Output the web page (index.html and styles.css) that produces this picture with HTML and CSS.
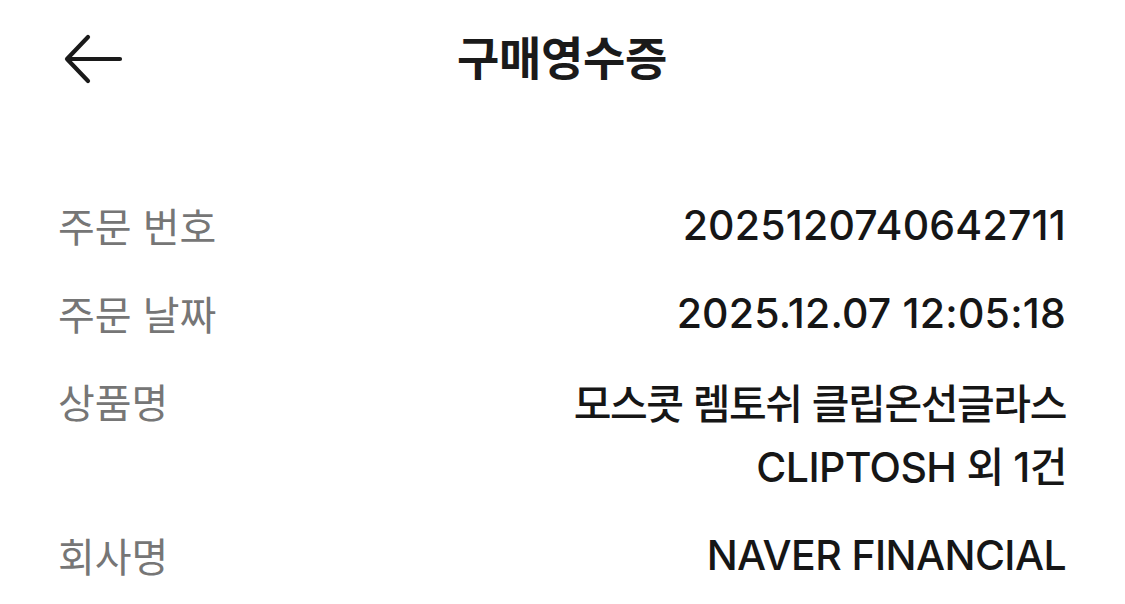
FILE: index.html
```html
<!DOCTYPE html>
<html lang="ko">
<head>
<meta charset="utf-8">
<link rel="stylesheet" href="styles.css">
</head>
<body>
<div class="page">
  <header class="header">
    <button class="back" aria-label="뒤로">
      <svg viewBox="0 0 60 50" width="60" height="50">
        <path d="M57 25 H4 M25 3 L4 25 L25 47" fill="none" stroke="#1a1a1a" stroke-width="4.2" stroke-linecap="round" stroke-linejoin="round"/>
      </svg>
    </button>
    <h1 class="title">구매영수증</h1>
  </header>
  <dl class="info">
    <div class="row">
      <dt class="label">주문 번호</dt>
      <dd class="value num">2025120740642711</dd>
    </div>
    <div class="row">
      <dt class="label">주문 날짜</dt>
      <dd class="value num">2025.12.07 12:05:18</dd>
    </div>
    <div class="row">
      <dt class="label">상품명</dt>
      <dd class="value"><span class="ko">모스콧 렘토쉬 클립온선글라스</span><br>CLIPTOSH <span class="ko">외</span> 1<span class="ko">건</span></dd>
    </div>
    <div class="row">
      <dt class="label">회사명</dt>
      <dd class="value">NAVER FINANCIAL</dd>
    </div>
  </dl>
</div>
</body>
</html>
```

FILE: styles.css
```css
html, body {
  margin: 0;
  padding: 0;
  background: #ffffff;
}
body {
  font-family: Inter, "Noto Sans CJK KR", sans-serif;
  color: #1a1a1a;
}
.page {
  width: 1125px;
  padding: 0 59px 0 58px;
  box-sizing: border-box;
}
.header {
  position: relative;
  height: 110px;
  display: flex;
  align-items: center;
  justify-content: center;
}
.back {
  position: absolute;
  left: 5px;
  top: 34px;
  padding: 0;
  border: 0;
  background: none;
  display: flex;
}
.title {
  margin: 0;
  font-family: "Noto Sans CJK KR", sans-serif;
  font-size: 46px;
  font-weight: 700;
  letter-spacing: -0.3px;
  color: #1a1a1a;
}
.info {
  margin: 85px 0 0;
  display: flex;
  flex-direction: column;
  gap: 28px;
}
.row {
  display: flex;
  justify-content: space-between;
  align-items: flex-start;
  line-height: 60px;
}
.label {
  margin: 0;
  font-family: "Noto Sans CJK KR", sans-serif;
  font-size: 40px;
  color: #767676;
  letter-spacing: 0;
}
.value {
  margin: 0;
  text-align: right;
  font-size: 41px;
  font-weight: 500;
  letter-spacing: -0.6px;
  color: #161616;
}
.value.num {
  letter-spacing: 0.2px;
}
.ko {
  font-family: "Noto Sans CJK KR", sans-serif;
  font-weight: 500;
  letter-spacing: -1.4px;
}
```
